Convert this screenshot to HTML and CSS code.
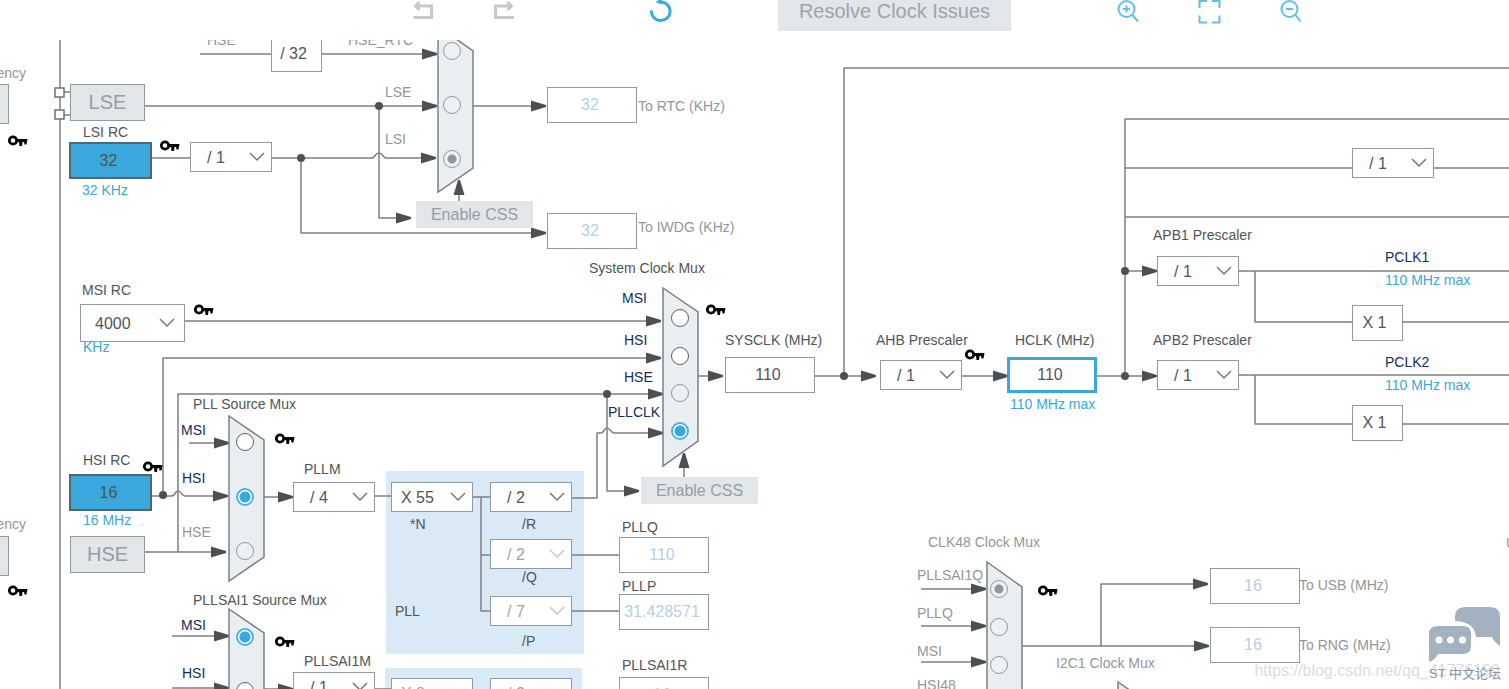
FILE: index.html
```html
<!DOCTYPE html>
<html lang="en">
<head>
<meta charset="utf-8">
<title>Clock Configuration</title>
<link rel="stylesheet" href="styles.css">
</head>
<body>
<div class="app">
  <header class="toolbar">
    <div class="tool-group">
      <button class="tool tool-muted" aria-label="Undo"><svg viewBox="0 0 24 24"><path d="M8.500 3 4.500 7l4 4M5 7h15.500v11.500H2.500"/></svg></button>
      <button class="tool tool-muted" aria-label="Redo"><svg viewBox="0 0 24 24"><path d="M15.500 3l4 4-4 4M19 7H3.500v11.500H22"/></svg></button>
    </div>
    <button class="tool tool-strong" aria-label="Refresh"><svg viewBox="0 0 24 24"><path d="M2.500 11.500A9.300 9.300 0 1 0 12 3"/><path class="solid" d="M6.500 3 12.500-.5v6z"/></svg></button>
    <button class="resolve">Resolve Clock Issues</button>
    <div class="tool-group">
      <button class="tool" aria-label="Zoom in"><svg viewBox="0 0 24 24"><circle cx="10.500" cy="10" r="8"/><path d="M16.500 16l5.500 6.500M7 10h7M10.500 6.500v7"/></svg></button>
      <button class="tool" aria-label="Fit to window"><svg viewBox="0 0 24 24"><path d="M2.500 9V2H10M15 2h7.500v7M22.500 16.500V23.500H15M10 23.500H2.500v-7"/></svg></button>
      <button class="tool" aria-label="Zoom out"><svg viewBox="0 0 24 24"><circle cx="11.500" cy="10" r="8"/><path d="M17.500 16l5 6.500M8 10h7"/></svg></button>
    </div>
  </header>

  <main class="canvas">
    <div class="diagram">
      <svg class="wiring" aria-hidden="false">
        <defs>
          <marker id="arrow" markerUnits="userSpaceOnUse" markerWidth="16" markerHeight="12" refX="15" refY="6" orient="auto"><path class="ink" d="M0 .5 15 5v2L0 11.500z"/></marker>
          <symbol id="key" viewBox="0 0 20 12" width="20" height="12"><circle class="key-ring" cx="5" cy="5.500" r="3.700"/><path class="key-ink" d="M8 4h11.500l-1 5.500h-2l-.5-2.500h-1.500L14 11h-2.500l-.5-4H8z"/></symbol>
        </defs>

        <rect class="panel" x="386" y="471" width="198" height="183" rx="2"/>
        <rect class="panel" x="385" y="668" width="197" height="200" rx="2"/>

        <g class="wire">
          <path d="M60 40V1200M64 92h6M64 115h6"/>
          <path d="M200 54h71"/><path class="to" d="M321 54H437"/>
          <path class="to" d="M144 106H437"/>
          <path d="M152 158h38"/><path class="to" d="M271 158h101c3 0 3-5 7-5s4 5 7 5h50"/>
          <path class="to" d="M379 106V218h32"/>
          <path class="to" d="M301 158v75H546"/>
          <path class="to" d="M473 106h73"/>
          <path class="to" d="M459 201v-21"/>
          <path class="to" d="M185 321H661"/>
          <path class="to" d="M163 495V358H661"/>
          <path class="to" d="M178 552V394H663"/>
          <path class="to" d="M607 394v97h32"/>
          <path class="to" d="M571 498h26v-65h4c3 0 3-5 6-5s4 5 7 5h49"/>
          <path class="to" d="M684 477v-24"/>
          <path class="to" d="M698 376h25"/>
          <path class="to" d="M189 443h40"/>
          <path class="to" d="M152 496h20c3 0 3-5 6-5s4 5 7 5h43"/>
          <path class="to" d="M144 552h82"/>
          <path class="to" d="M172 636h57"/><path class="to" d="M172 688h57"/>
          <path class="to" d="M264 497h29"/><path class="to" d="M264 689h29"/>
          <path d="M375 496h16M473 497h17M481 497v114h9M481 555h9M571 555h48M571 611h48M375 689h16M473 693h17"/>
          <path class="to" d="M814 376h62"/><path d="M844 376V68H4000"/>
          <path class="to" d="M962 376h46"/>
          <path class="to" d="M1096 376h61"/>
          <path d="M1125 376V119H4000M1125 168H4000M1125 217H4000"/>
          <path class="to" d="M1125 271h32"/>
          <path d="M1239 271H4000M1255 271v51H4000M1239 375H4000M1255 375v49H4000"/>
          <path class="to" d="M921 589h65"/><path class="to" d="M921 626h65"/><path class="to" d="M921 662h65"/>
          <path class="to" d="M1022 646h187"/><path class="to" d="M1101 646v-62h107"/>
        </g>
        <g class="ink">
          <circle cx="379" cy="106" r="4"/><circle cx="301" cy="158" r="4"/><circle cx="163" cy="495" r="4"/><circle cx="607" cy="394" r="4"/>
          <circle cx="844" cy="376" r="4"/><circle cx="1125" cy="271" r="4"/><circle cx="1125" cy="376" r="4"/>
        </g>
        <g class="pin"><rect x="55" y="88" width="9" height="9"/><rect x="55" y="110" width="9" height="9"/></g>

        <g class="mux">
          <path d="M438 26l35 25v117l-35 24z"/>
          <path d="M663 288l35 24v129l-35 25z"/>
          <path d="M229 416l35 24v117l-35 24z"/>
          <path d="M229 609l35 24v140l-35 24z"/>
          <path d="M987 562l35 25v140l-35 24z"/>
          <path d="M1118 682l35 24v140l-35 24z"/>
        </g>

        <g>
          <use href="#key" x="8" y="135"/><use href="#key" x="160" y="140"/><use href="#key" x="194" y="304"/><use href="#key" x="143" y="461"/>
          <use href="#key" x="275" y="433"/><use href="#key" x="8" y="585"/><use href="#key" x="275" y="636"/><use href="#key" x="706" y="304"/>
          <use href="#key" x="965" y="349"/><use href="#key" x="1038" y="585"/>
        </g>

        <g class="label">
          <text id="l-lsi" x="83" y="137">LSI RC</text>
          <text id="l-msi" x="82" y="295">MSI RC</text>
          <text id="l-hsi" x="83" y="465">HSI RC</text>
          <text id="l-sysmux" x="589" y="273">System Clock Mux</text>
          <text id="l-pllmux" x="193" y="409">PLL Source Mux</text>
          <text id="l-saimux" x="193" y="605">PLLSAI1 Source Mux</text>
          <text id="l-pllm" x="304" y="474">PLLM</text>
          <text id="l-saim" x="304" y="666">PLLSAI1M</text>
          <text id="l-n" x="410" y="529">*N</text>
          <text id="l-r" x="522" y="529">/R</text>
          <text id="l-q" x="522" y="582">/Q</text>
          <text id="l-p" x="522" y="646">/P</text>
          <text x="395" y="616">PLL</text>
          <text id="l-pllq" x="622" y="532">PLLQ</text>
          <text id="l-pllp" x="622" y="591">PLLP</text>
          <text id="l-sair" x="622" y="670">PLLSAI1R</text>
          <text id="l-sysclk" x="725" y="345">SYSCLK (MHz)</text>
          <text id="l-ahb" x="876" y="345">AHB Prescaler</text>
          <text id="l-hclk" x="1015" y="345">HCLK (MHz)</text>
          <text id="l-apb1" x="1153" y="240">APB1 Prescaler</text>
          <text id="l-apb2" x="1153" y="345">APB2 Prescaler</text>
        </g>
        <g class="label label-muted">
          <text text-anchor="end" x="26" y="78">ency</text>
          <text text-anchor="end" x="26" y="529">ency</text>
          <text x="207" y="45">HSE</text>
          <text x="348" y="45">HSE_RTC</text>
          <text x="385" y="97">LSE</text>
          <text x="385" y="144">LSI</text>
          <text id="l-rtc" x="638" y="111">To RTC (KHz)</text>
          <text id="l-iwdg" x="638" y="232">To IWDG (KHz)</text>
          <text x="182" y="537">HSE</text>
          <text id="l-clk48" x="928" y="547">CLK48 Clock Mux</text>
          <text x="917" y="580">PLLSAI1Q</text>
          <text x="917" y="618">PLLQ</text>
          <text x="917" y="656">MSI</text>
          <text x="917" y="690">HSI48</text>
          <text x="1056" y="668">I2C1 Clock Mux</text>
          <text id="l-usb" x="1299" y="590">To USB (MHz)</text>
          <text id="l-rng" x="1299" y="650">To RNG (MHz)</text>
          <text x="1506" y="548">U</text>
        </g>
        <g class="label label-signal">
          <text x="622" y="303">MSI</text><text x="624" y="345">HSI</text><text x="624" y="382">HSE</text><text x="608" y="417">PLLCLK</text>
          <text x="181" y="435">MSI</text><text x="182" y="483">HSI</text>
          <text x="181" y="630">MSI</text><text x="182" y="678">HSI</text>
          <text x="1385" y="262">PCLK1</text><text x="1385" y="367">PCLK2</text>
        </g>
        <g class="label label-limit">
          <text x="82" y="195">32 KHz</text><text x="83" y="352">KHz</text><text x="83" y="525">16 MHz</text>
          <text x="1010" y="409">110 MHz max</text><text x="1385" y="285">110 MHz max</text><text x="1385" y="390">110 MHz max</text>
        </g>
      </svg>

      <button class="node source cut-top" disabled aria-label="Input frequency"></button>
      <button class="node source cut-bottom" disabled aria-label="Input frequency"></button>
      <button class="node source lse" disabled>LSE</button>
      <button class="node source hse" disabled>HSE</button>
      <input class="node osc lsi" aria-labelledby="l-lsi" value="32" readonly>
      <input class="node osc hsi" aria-labelledby="l-hsi" value="16" readonly>

      <output class="node fixed rtc-div">/ 32</output>
      <output class="node fixed tim1">X 1</output>
      <output class="node fixed tim2">X 1</output>

      <select class="node pick lsi-div" aria-label="LSI divider"><option>/ 1</option></select>
      <select class="node pick pick-tall msi" aria-labelledby="l-msi"><option>4000</option></select>
      <select class="node pick pllm" aria-labelledby="l-pllm"><option>/ 4</option></select>
      <select class="node pick pick-mul plln" aria-labelledby="l-n"><option>X 55</option></select>
      <select class="node pick pllr" aria-labelledby="l-r"><option>/ 2</option></select>
      <select class="node pick pllq" aria-labelledby="l-q" disabled><option>/ 2</option></select>
      <select class="node pick pllp" aria-labelledby="l-p" disabled><option>/ 7</option></select>
      <select class="node pick saim" aria-labelledby="l-saim"><option>/ 1</option></select>
      <select class="node pick pick-mul sain" aria-label="PLLSAI1 N" disabled><option>X 8</option></select>
      <select class="node pick sair" aria-label="PLLSAI1 R" disabled><option>/ 2</option></select>
      <select class="node pick ahb" aria-labelledby="l-ahb"><option>/ 1</option></select>
      <select class="node pick cortex" aria-label="Cortex timer prescaler"><option>/ 1</option></select>
      <select class="node pick apb1" aria-labelledby="l-apb1"><option>/ 1</option></select>
      <select class="node pick apb2" aria-labelledby="l-apb2"><option>/ 1</option></select>

      <input class="node field rtc" aria-labelledby="l-rtc" value="32" disabled>
      <input class="node field iwdg" aria-labelledby="l-iwdg" value="32" disabled>
      <input class="node field pllq-out" aria-labelledby="l-pllq" value="110" disabled>
      <input class="node field pllp-out" aria-labelledby="l-pllp" value="31.428571" disabled>
      <input class="node field sair-out" aria-labelledby="l-sair" value="16" disabled>
      <input class="node field sysclk" aria-labelledby="l-sysclk" value="110">
      <input class="node field field-target hclk" aria-labelledby="l-hclk" value="110">
      <input class="node field usb" aria-labelledby="l-usb" value="16" disabled>
      <input class="node field rng" aria-labelledby="l-rng" value="16" disabled>

      <button class="node css-button css-rtc" disabled>Enable CSS</button>
      <button class="node css-button css-sys" disabled>Enable CSS</button>

      <div class="node choices rtc-mux" role="radiogroup" aria-label="RTC Clock Mux">
        <input type="radio" name="rtc" aria-label="HSE_RTC" disabled>
        <input type="radio" name="rtc" aria-label="LSE" disabled>
        <input type="radio" name="rtc" aria-label="LSI" disabled checked>
      </div>
      <div class="node choices sys-mux" role="radiogroup" aria-labelledby="l-sysmux">
        <input type="radio" name="sys" aria-label="MSI">
        <input type="radio" name="sys" aria-label="HSI">
        <input type="radio" name="sys" aria-label="HSE" disabled>
        <input type="radio" name="sys" aria-label="PLLCLK" checked>
      </div>
      <div class="node choices pll-mux" role="radiogroup" aria-labelledby="l-pllmux">
        <input type="radio" name="pll" aria-label="MSI">
        <input type="radio" name="pll" aria-label="HSI" checked>
        <input type="radio" name="pll" aria-label="HSE" disabled>
      </div>
      <div class="node choices sai-mux" role="radiogroup" aria-labelledby="l-saimux">
        <input type="radio" name="sai" aria-label="MSI" checked>
        <input type="radio" name="sai" aria-label="HSI">
      </div>
      <div class="node choices clk48-mux" role="radiogroup" aria-labelledby="l-clk48">
        <input type="radio" name="clk48" aria-label="PLLSAI1Q" disabled checked>
        <input type="radio" name="clk48" aria-label="PLLQ" disabled>
        <input type="radio" name="clk48" aria-label="MSI" disabled>
      </div>
    </div>

    <div class="credit">https://blog.csdn.net/qq_41776159</div>
    <div class="forum">
      <svg viewBox="0 0 72 56" width="72" height="56" aria-hidden="true">
        <path d="M26 14V10Q26 0 36 0H61Q71 0 71 10V39Q66 36 63 30H47Q46 15 26 14z"/>
        <path d="M9 19H34Q42 19 42 27V39Q42 47 34 47H9Q6 53 0 55V27Q0 19 9 19z"/>
        <g class="dots"><circle cx="10" cy="33" r="3.500"/><circle cx="21.500" cy="33" r="3.500"/><circle cx="33.500" cy="33" r="3.500"/></g>
      </svg>
      <span>ST 中文论坛</span>
    </div>
  </main>
</div>
</body>
</html>
```
FILE: styles.css
```css
* { box-sizing: border-box; }

html, body { height: 100%; }

body {
  margin: 0;
  background: #fff;
  color: #525456;
  font-family: "Liberation Sans", "Noto Sans CJK SC", sans-serif;
  font-size: 16px;
}

button, input, select { margin: 0; font: inherit; }

.app {
  display: flex;
  flex-direction: column;
  height: 100vh;
  overflow: hidden;
}

/* Toolbar */
.toolbar {
  display: flex;
  align-items: center;
  gap: 105px;
  flex: none;
  height: 22px;
  margin-bottom: 18px;
  padding-left: 411px;
}
.tool-group { display: flex; gap: 57px; }
.tool-group + .tool { margin-left: 28px; }
.tool {
  width: 24px;
  height: 24px;
  padding: 0;
  border: 0;
  background: none;
  color: #62bfe8;
}
.tool svg {
  display: block;
  overflow: visible;
  fill: none;
  stroke: currentColor;
  stroke-width: 2;
}
.tool-strong { color: #3baae0; }
.tool-strong svg { stroke-width: 3; }
.tool-muted { color: #c8c8c8; }
.tool-muted svg { stroke-width: 3; }
.tool .solid { fill: currentColor; stroke: none; }
.resolve {
  width: 233px;
  height: 40px;
  flex: none;
  padding: 0;
  border: 0;
  background: #e2e6e9;
  color: #9da5ab;
  font-size: 20px;
}

/* Canvas, scrolled down by the toolbar's height */
.canvas {
  position: relative;
  flex: 1;
  min-height: 0;
  overflow: hidden;
}
.diagram { position: absolute; inset: -40px 0 0; }
.wiring {
  position: absolute;
  inset: 0;
  width: 100%;
  height: 100%;
}
.wire { fill: none; stroke: #7c7f81; stroke-width: 1.5; stroke-linejoin: round; }
.wire .to { marker-end: url(#arrow); }
.ink { fill: #4d5052; }
.pin { fill: #fff; stroke: #6e7173; stroke-width: 1.5; }
.panel { fill: #d9e9f6; }
.mux { fill: #eaeef1; stroke: #77818c; stroke-width: 1.5; }
.key-ring { fill: none; stroke: #080808; stroke-width: 2.8; }
.key-ink { fill: #080808; }

.label { font-size: 14px; fill: #525456; }
.label-muted { fill: #949698; }
.label-signal { fill: #142c62; }
.label-limit { fill: #39a8dc; }

/* Nodes */
.node { position: absolute; }

.source {
  width: 75px;
  height: 37px;
  padding: 0;
  border: 1px solid #8f9aa2;
  background: #e2e6e9;
  color: #969ea4;
  font-size: 20px;
}
.osc {
  width: 83px;
  height: 37px;
  padding: 0 4px 0 0;
  border: 2px solid #4f6676;
  background: #3aa8dc;
  color: #4d5254;
  text-align: center;
}
.fixed {
  display: grid;
  place-items: center;
  width: 51px;
  height: 36px;
  padding-right: 6px;
  border: 1px solid #8f9aa2;
  background: #fff;
}
.pick {
  appearance: none;
  width: 82px;
  height: 30px;
  padding: 0 0 0 16px;
  border: 1px solid #8f9aa2;
  border-radius: 0;
  background: #fff url("data:image/svg+xml,%3Csvg xmlns='http://www.w3.org/2000/svg' width='16' height='10'%3E%3Cpath d='M1 1l7 7 7-7' fill='none' stroke='%23777777' stroke-width='1.500'/%3E%3C/svg%3E") no-repeat right 6px center;
  color: #525456;
}
.pick:disabled {
  background-image: url("data:image/svg+xml,%3Csvg xmlns='http://www.w3.org/2000/svg' width='16' height='10'%3E%3Cpath d='M1 1l7 7 7-7' fill='none' stroke='%23c4c8cb' stroke-width='1.500'/%3E%3C/svg%3E");
  color: #a0a3a5;
  opacity: 1;
}
.pick-tall { width: 105px; height: 38px; padding-left: 14px; background-position: right 9px center; }
.pick-mul { padding-left: 9px; }

.field {
  width: 90px;
  height: 36px;
  padding: 0 4px 0 0;
  border: 1px solid #8f9aa2;
  background: #fff;
  color: #525456;
  text-align: center;
}
.field:disabled { color: #b7cfe8; }
.field-target { border: 3px solid #39a8dc; }

.css-button {
  width: 117px;
  height: 27px;
  padding: 0;
  border: 0;
  background: #e2e6e9;
  color: #969ea4;
}

.choices { display: flex; flex-direction: column; justify-content: space-between; }
.choices input {
  appearance: none;
  width: 18px;
  height: 18px;
  border: 1px solid #5c6063;
  border-radius: 50%;
  background: #fff;
}
.choices input:disabled { border-color: #92989c; background: #eef0f2; }
.choices input:checked {
  border: 2px solid #4bb2e2;
  background: radial-gradient(circle, #39a8dc 5px, #fff 6px);
}
.choices input:checked:disabled {
  border: 1px solid #92989c;
  background: radial-gradient(circle, #8f979d 4px, #eef0f2 5px);
}

/* Node places on the canvas */
.cut-top { left: -66px; top: 84px; height: 40px; }
.cut-bottom { left: -66px; top: 536px; height: 40px; }
.lse { left: 70px; top: 84px; }
.hse { left: 70px; top: 536px; }
.lsi { left: 69px; top: 142px; }
.hsi { left: 69px; top: 474px; }

.rtc-div { left: 271px; top: 36px; }
.tim1 { left: 1352px; top: 305px; }
.tim2 { left: 1352px; top: 405px; }

.lsi-div { left: 190px; top: 142px; }
.msi { left: 80px; top: 304px; }
.pllm { left: 293px; top: 482px; }
.plln { left: 391px; top: 482px; }
.pllr { left: 490px; top: 482px; }
.pllq { left: 490px; top: 539px; }
.pllp { left: 490px; top: 596px; }
.saim { left: 293px; top: 672px; }
.sain { left: 391px; top: 678px; }
.sair { left: 490px; top: 678px; }
.ahb { left: 880px; top: 360px; }
.cortex { left: 1352px; top: 148px; }
.apb1 { left: 1157px; top: 256px; }
.apb2 { left: 1157px; top: 360px; }

.rtc { left: 547px; top: 87px; }
.iwdg { left: 547px; top: 213px; }
.pllq-out { left: 619px; top: 537px; }
.pllp-out { left: 619px; top: 594px; }
.sair-out { left: 619px; top: 677px; }
.sysclk { left: 725px; top: 357px; }
.hclk { left: 1007px; top: 357px; }
.usb { left: 1210px; top: 568px; }
.rng { left: 1210px; top: 627px; }

.css-rtc { left: 416px; top: 201px; }
.css-sys { left: 641px; top: 477px; }

.rtc-mux { left: 443px; top: 42px; height: 126px; }
.sys-mux { left: 671px; top: 309px; height: 131px; }
.pll-mux { left: 236px; top: 433px; height: 127px; }
.sai-mux { left: 236px; top: 628px; height: 72px; }
.clk48-mux { left: 990px; top: 580px; height: 94px; }

/* Watermarks */
.credit {
  position: absolute;
  right: 9px;
  bottom: 8px;
  color: #dcdcdc;
  font-size: 16px;
  line-height: 20px;
}
.forum {
  position: absolute;
  right: 8px;
  bottom: 6px;
  display: flex;
  flex-direction: column;
  align-items: center;
  gap: 2px;
  color: #8496ae;
  font-size: 13px;
  line-height: 18px;
}
.forum svg { fill: #a4b1c1; overflow: visible; }
.forum .dots { fill: #fff; }
```
